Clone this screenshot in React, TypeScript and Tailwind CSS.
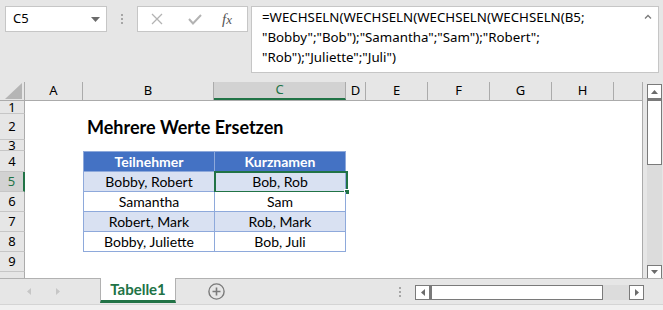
import React from 'react';

const ui = { fontFamily: '"Noto Sans", "Open Sans", sans-serif' };
const cal = { fontFamily: 'Lato, "Liberation Sans", sans-serif' };

const cols = [
  { key: 'A', w: 'w-[58px]' },
  { key: 'B', w: 'w-[131px]' },
  { key: 'C', w: 'w-[132px]' },
  { key: 'D', w: 'w-[20px]' },
  { key: 'E', w: 'w-[62px]' },
  { key: 'F', w: 'w-[62px]' },
  { key: 'G', w: 'w-[62px]' },
  { key: 'H', w: 'w-[62px]' },
];

const rows = [
  { n: '1', h: 'h-[13px]' },
  { n: '2', h: 'h-[26px]' },
  { n: '3', h: 'h-[11px]' },
  { n: '4', h: 'h-[21px]' },
  { n: '5', h: 'h-[20px]' },
  { n: '6', h: 'h-[20px]' },
  { n: '7', h: 'h-[20px]' },
  { n: '8', h: 'h-[20px]' },
  { n: '9', h: 'h-[20px]' },
  { n: '', h: 'h-[7px]' },
];

const data: Record<string, [string, string]> = {
  '5': ['Bobby, Robert', 'Bob, Rob'],
  '6': ['Samantha', 'Sam'],
  '7': ['Robert, Mark', 'Rob, Mark'],
  '8': ['Bobby, Juliette', 'Bob, Juli'],
};

function TableCells({ n }: { n: string }) {
  if (n === '2') {
    return (
      <div className="w-[263px] h-full flex items-end pb-[4px] pl-[4px] text-[18px] font-bold text-black leading-none" style={cal}>
        Mehrere Werte Ersetzen
      </div>
    );
  }
  if (n === '4') {
    return (
      <div className="flex h-full" style={cal}>
        <div className="w-[131px] h-full bg-[#4472c4] border border-[#8ea9db] border-r-0 flex items-center justify-center text-white font-bold text-[14px]">
          Teilnehmer
        </div>
        <div className="w-[132px] h-full bg-[#4472c4] border border-[#8ea9db] flex items-center justify-center text-white font-bold text-[14px]">
          Kurznamen
        </div>
      </div>
    );
  }
  const d = data[n];
  if (!d) return <div className="w-[263px]" />;
  const bg = n === '5' || n === '7' ? 'bg-[#d9e1f2]' : 'bg-white';
  return (
    <div className="flex h-full text-[14px] text-black" style={cal}>
      <div className={`w-[131px] h-full ${bg} border-l border-b border-[#8ea9db] flex items-center justify-center`}>{d[0]}</div>
      <div className={`relative w-[132px] h-full ${bg} border-l border-r border-b border-[#8ea9db] flex items-center justify-center`}>
        {d[1]}
        {n === '5' && (
          <div className="absolute -left-[1px] -top-[1px] w-[134px] h-[22px] border-2 border-[#217346]">
            <div className="absolute -right-[4px] -bottom-[4px] w-[6px] h-[6px] bg-[#217346] border border-white" />
          </div>
        )}
      </div>
    </div>
  );
}

export default function App() {
  return (
    <div className="w-[663px] h-[310px] bg-[#e6e6e6] overflow-hidden flex flex-col" style={ui}>
      {/* formula bar */}
      <div className="h-[82px] flex items-start pt-[6px] pl-[5px]">
        <div className="w-[102px] h-[26px] bg-white border border-[#c6c6c6] flex items-center justify-between pl-[7px] pr-[6px]">
          <span className="text-[13px] text-black">C5</span>
          <svg width="9" height="5" viewBox="0 0 9 5"><polygon points="0,0 9,0 4.5,5" fill="#6b6b6b" /></svg>
        </div>
        <div className="w-[30px] h-[26px] flex flex-col items-center justify-center gap-[2px]">
          <div className="w-[2px] h-[2px] bg-[#a6a6a6]" />
          <div className="w-[2px] h-[2px] bg-[#a6a6a6]" />
          <div className="w-[2px] h-[2px] bg-[#a6a6a6]" />
        </div>
        <div className="w-[111px] h-[26px] bg-white border border-[#c6c6c6] flex items-center pl-[13px]">
          <svg width="12" height="12" viewBox="0 0 12 12"><path d="M1 1L11 11M11 1L1 11" stroke="#b3b3b3" strokeWidth="1.3" /></svg>
          <svg className="ml-[25px]" width="14" height="11" viewBox="0 0 14 11"><path d="M1 5L5 9.5L13 1" stroke="#b3b3b3" strokeWidth="2" fill="none" /></svg>
          <span className="ml-[20px] text-[15px] italic text-[#555]" style={{ fontFamily: '"Liberation Serif", serif' }}>
            f<span className="text-[13px]">x</span>
          </span>
        </div>
        <div className="ml-[3px] w-[408px] h-[67px] bg-white border border-[#c6c6c6] flex">
          <div className="flex-1 pl-[10px] pt-[0px] text-[13.3px] leading-[20px] text-black">
            <div>=WECHSELN(WECHSELN(WECHSELN(WECHSELN(B5;</div>
            <div>"Bobby";"Bob");"Samantha";"Sam");"Robert";</div>
            <div>"Rob");"Juliette";"Juli")</div>
          </div>
          <div className="w-[14px] pt-[7px]">
            <svg width="8" height="5" viewBox="0 0 8 5"><path d="M1 4.5L4 1.5L7 4.5" stroke="#7a7a7a" strokeWidth="1.3" fill="none" /></svg>
          </div>
        </div>
      </div>

      {/* sheet area */}
      <div className="flex h-[197px]">
        <div className="w-[643px] flex flex-col border-r border-[#ababab]">
          {/* column header */}
          <div className="flex h-[19px] border-b border-[#ababab] text-[13px] text-black">
            <div className="w-[25px] h-full border-r border-[#ababab] flex items-end justify-end pr-[2px] pb-[1px]">
              <svg width="17" height="16" viewBox="0 0 17 16"><polygon points="17,0 17,16 0,16" fill="#b5b5b5" /></svg>
            </div>
            {cols.map((c) => (
              <div
                key={c.key}
                className={`${c.w} h-full border-r flex items-center justify-center ${
                  c.key === 'C' ? 'bg-[#d2d2d2] text-[#217346] border-b-2 border-b-[#217346] border-r-[#ababab]' : 'border-[#ababab]'
                }`}
              >
                {c.key}
              </div>
            ))}
            <div className="flex-1" />
          </div>
          {/* rows */}
          {rows.map((r) => (
            <div key={r.n + r.h} className={`flex ${r.h} bg-white`}>
              <div
                className={`w-[25px] h-full shrink-0 border-b border-[#c6c6c6] flex items-center justify-center text-[13px] leading-none overflow-hidden ${
                  r.n === '5' ? 'bg-[#d2d2d2] text-[#217346] border-r-2 border-r-[#217346]' : 'bg-[#e6e6e6] text-black border-r border-r-[#ababab]'
                }`}
              >
                {r.n}
              </div>
              <div className="w-[58px] shrink-0" />
              <TableCells n={r.n} />
            </div>
          ))}
        </div>
        {/* vertical scrollbar */}
        <div className="flex-1 flex flex-col items-center pt-[2px] pl-[3px] pb-[0px]">
          <div className="w-[15px] h-[15px] bg-white border border-[#7a7a7a] flex items-center justify-center">
            <svg width="7" height="4" viewBox="0 0 7 4"><polygon points="0,4 7,4 3.5,0" fill="#6b6b6b" /></svg>
          </div>
          <div className="w-[15px] h-[66px] bg-white border border-[#7a7a7a] border-t-2" />
          <div className="w-[15px] flex-1 bg-[#dcdcdc]" />
          <div className="w-[15px] h-[14px] bg-white border border-[#7a7a7a] flex items-center justify-center">
            <svg width="7" height="4" viewBox="0 0 7 4"><polygon points="0,0 7,0 3.5,4" fill="#6b6b6b" /></svg>
          </div>
        </div>
      </div>

      {/* sheet tabs */}
      <div className="flex h-[26px] border-t border-[#b1b1b1] -mt-[1px]">
        <div className="w-[100px] flex items-center">
          <svg className="ml-[27px]" width="4" height="7" viewBox="0 0 4 7"><polygon points="4,0 4,7 0,3.5" fill="#c6c6c6" /></svg>
          <svg className="ml-[25px]" width="4" height="7" viewBox="0 0 4 7"><polygon points="0,0 0,7 4,3.5" fill="#c6c6c6" /></svg>
        </div>
        <div
          className="w-[76px] -mt-[1px] h-[25px] bg-white border-l border-r border-[#b1b1b1] border-b-[3px] border-b-[#217346] flex items-center justify-center text-[15px] font-bold text-[#217346]"
          style={cal}
        >
          Tabelle1
        </div>
        <div className="w-[49px] flex items-center justify-end">
          <svg width="17" height="17" viewBox="0 0 17 17">
            <circle cx="8.5" cy="8.5" r="7.6" stroke="#7a7a7a" strokeWidth="1.4" fill="none" />
            <path d="M8.5 4.5V12.5M4.5 8.5H12.5" stroke="#7a7a7a" strokeWidth="1.6" />
          </svg>
        </div>
        <div className="w-[173px]" />
        <div className="w-[4px] flex flex-col items-center justify-center gap-[2px]">
          <div className="w-[2px] h-[2px] bg-[#a6a6a6]" />
          <div className="w-[2px] h-[2px] bg-[#a6a6a6]" />
          <div className="w-[2px] h-[2px] bg-[#a6a6a6]" />
        </div>
        <div className="ml-[13px] mt-[6px] flex h-[15px] w-[229px]">
          <div className="w-[15px] h-full bg-white border border-[#7a7a7a] flex items-center justify-center">
            <svg width="4" height="7" viewBox="0 0 4 7"><polygon points="4,0 4,7 0,3.5" fill="#6b6b6b" /></svg>
          </div>
          <div className="w-[173px] h-full bg-white border border-[#7a7a7a] border-l-2" />
          <div className="flex-1 h-full bg-[#dcdcdc]" />
          <div className="w-[15px] h-full bg-white border border-[#7a7a7a] flex items-center justify-center">
            <svg width="4" height="7" viewBox="0 0 4 7"><polygon points="0,0 0,7 4,3.5" fill="#6b6b6b" /></svg>
          </div>
        </div>
      </div>
      <div className="flex-1 border-t border-[#d4d4d4] bg-[#f0f0f0]" />
    </div>
  );
}
